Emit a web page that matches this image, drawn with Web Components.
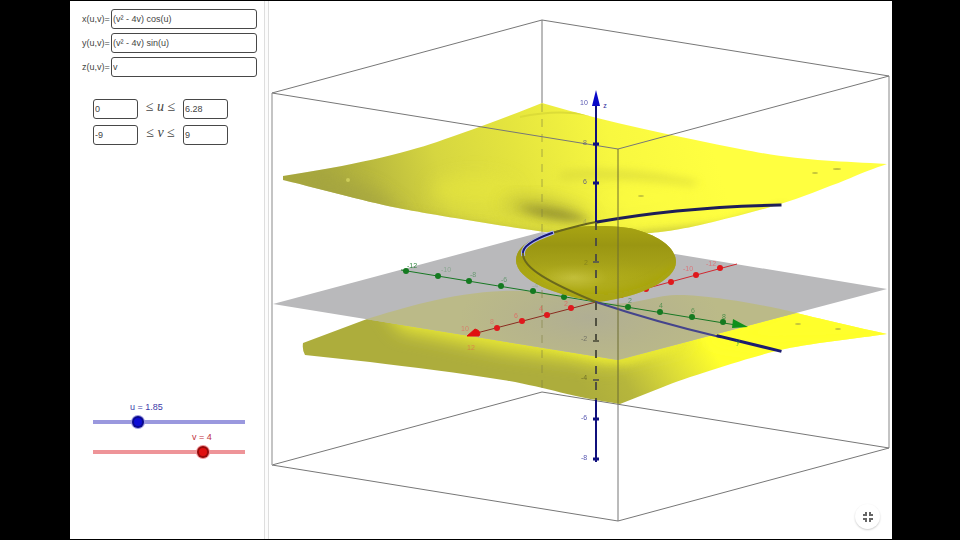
<!DOCTYPE html>
<html lang="en">
<head>
<meta charset="utf-8">
<title>Parametric surface</title>
<style>
html,body{margin:0;background:#000}
body{font-family:"Liberation Sans",Arial,sans-serif;font-size:9px;color:#444}
</style>
</head>
<body>
<surface-app>
  <control-panel slot="controls">
    <formula-field slot="formula" label="x(u,v)=" value="(v² - 4v) cos(u)"></formula-field>
    <formula-field slot="formula" label="y(u,v)=" value="(v² - 4v) sin(u)"></formula-field>
    <formula-field slot="formula" label="z(u,v)=" value="v"></formula-field>
    <range-field slot="range" name="u" low="0" high="6.28"></range-field>
    <range-field slot="range" name="v" low="-9" high="9"></range-field>
    <param-slider slot="slider" name="u" min="0" max="6.28" value="1.85" style="--track:#9a98de;--thumb:#0c0cd6;--ink:#3a3aa8;--shift:38px"></param-slider>
    <param-slider slot="slider" name="v" min="-9" max="9" value="4" style="--track:#ee9498;--thumb:#e01010;--ink:#c03040;--shift:100px"></param-slider>
  </control-panel>
  <surface-view slot="view"></surface-view>
</surface-app>

<script>
class Base extends HTMLElement {
  mount(html) { this.attachShadow({ mode: "open" }).innerHTML = html; }
}

customElements.define("surface-app", class extends Base {
  connectedCallback() {
    this.mount(`<style>
      :host{display:grid;grid-template-columns:194px 5px minmax(0,1fr);height:100vh;box-sizing:border-box;padding:1px 68px 1px 70px;background:#000}
      .split{background:#fcfcfc;border:solid #dedede;border-width:0 1px;box-sizing:border-box}
    </style><slot name="controls"></slot><div class="split"></div><slot name="view"></slot>`);
  }
});

customElements.define("control-panel", class extends Base {
  connectedCallback() {
    this.mount(`<style>
      :host{display:flex;flex-direction:column;background:#fff;box-sizing:border-box;padding:8px 7px 80px 12px}
      .formulas{display:grid;gap:4px}
      .ranges{display:grid;gap:6px;margin:22px 0 0 11px}
      .sliders{display:grid;gap:2px;margin-top:auto}
    </style>
    <div class="formulas"><slot name="formula"></slot></div>
    <div class="ranges"><slot name="range"></slot></div>
    <div class="sliders"><slot name="slider"></slot></div>`);
  }
});

const fieldCss = `input{font:inherit;color:#444;box-sizing:border-box;height:20px;min-width:0;margin:0;padding:0 1px;border:1px solid #484848;border-radius:3px;background:#fff;outline:0}`;

customElements.define("formula-field", class extends Base {
  connectedCallback() {
    this.mount(`<style>${fieldCss}
      :host{display:flex;align-items:center}
      label{flex:0 0 29px;white-space:nowrap}
      input{flex:1}
    </style><label for="f">${this.getAttribute("label")}</label><input id="f" type="text" value="${this.getAttribute("value")}">`);
  }
});

customElements.define("range-field", class extends Base {
  connectedCallback() {
    const n = this.getAttribute("name");
    this.mount(`<style>${fieldCss}
      :host{display:grid;grid-template-columns:45px 45px 45px;align-items:center}
      span{font:14px/16px "Liberation Serif","Times New Roman",serif;text-align:center;white-space:nowrap;padding-bottom:4px}
    </style><input type="text" aria-label="${n} minimum" value="${this.getAttribute("low")}"><span>≤ <i>${n}</i> ≤</span><input type="text" aria-label="${n} maximum" value="${this.getAttribute("high")}">`);
  }
});

customElements.define("param-slider", class extends Base {
  connectedCallback() {
    const a = k => this.getAttribute(k);
    this.mount(`<style>
      :host{display:grid;gap:2px;padding-left:5px}
      label{color:var(--ink);line-height:12px;padding-left:calc(var(--shift) + 5px)}
      input{appearance:none;width:164px;height:14px;margin:0;background:none;outline:0}
      input::-webkit-slider-runnable-track{height:4px;background:linear-gradient(var(--track),var(--track)) center/calc(100% - 12px) 4px no-repeat}
      input::-webkit-slider-thumb{appearance:none;box-sizing:border-box;width:12px;height:12px;margin-top:-4px;border-radius:50%;background:var(--thumb);border:2px solid #0005;box-shadow:0 0 0 1px var(--track)}
    </style><label for="s">${a("name")} = ${a("value")}</label><input id="s" type="range" step="any" min="${a("min")}" max="${a("max")}" value="${a("value")}">`);
  }
});

const UPPER = "M283 176C350 166 405 153 437 142S515 114 542 103C610 123 680 137 740 149S835 161 887 164C860 173 845 181 830 186C790 203 750 213 713 222S660 232 640 234H560C520 229 435 215 403 209S325 190 283 180Z";
const LOWER = "M303 343L367 319C400 309 450 293 503 291S560 300 600 303S650 295 680 295S770 306 793 312S860 328 887 334C860 338 805 344 780 350S690 376 663 387L620 404C570 397 545 387 503 380S410 367 370 362L305 355Q302 350 303 343Z";
const PLANE = "M273 304L542 232L887 289L618 360Z";
const BOWL = "M516 260C516 247 534 235 560 230C580 225 615 225 634 229C660 236 676 248 676 262C676 280 640 297 598 302C558 296 516 281 516 260Z";

const dots = (pts, r, c) => pts.map(([x, y]) => `<circle cx="${x}" cy="${y}" r="${r}" fill="${c}"/>`).join("");
const texts = list => list.map(([x, y, t, c, o]) => `<text x="${x}" y="${y}" fill="${c}" opacity="${o}">${t}</text>`).join("");

customElements.define("surface-view", class extends Base {
  connectedCallback() {
    const N = "#2a2a9c", G = "#1c7a2c", R = "#f04850";
    this.mount(`<style>
      :host{display:block;position:relative;background:#fff;min-height:0}
      svg.scene{display:block;width:100%;height:100%}
      text{font:7px "Liberation Sans",Arial,sans-serif;text-anchor:middle}
      button{position:absolute;right:12px;bottom:10px;width:25px;height:25px;padding:0;border:0;border-radius:50%;background:#fff;box-shadow:0 1px 2px #0003;display:grid;place-items:center}
    </style>
    <svg class="scene" viewBox="269 1 623 538" role="img" aria-label="Surface with x, y and z axes">
      <defs>
        <linearGradient id="up" gradientUnits="userSpaceOnUse" x1="330" y1="205" x2="700" y2="100">
          <stop offset="0" stop-color="#a8a83e"/><stop offset=".12" stop-color="#b8b83e"/><stop offset=".3" stop-color="#d6d640"/><stop offset=".5" stop-color="#e4e43e"/><stop offset=".75" stop-color="#f8f840"/><stop offset="1" stop-color="#ffff40"/>
        </linearGradient>
        <linearGradient id="low" gradientUnits="userSpaceOnUse" x1="590" y1="400" x2="700" y2="330">
          <stop offset="0" stop-color="#adad3c"/><stop offset=".3" stop-color="#b6b63c"/><stop offset=".65" stop-color="#dcdc38"/><stop offset="1" stop-color="#ffff2c"/>
        </linearGradient>
        <radialGradient id="bowl" gradientUnits="userSpaceOnUse" cx="574" cy="277" r="76" gradientTransform="translate(0 166) scale(1 .4)">
          <stop offset="0" stop-color="#c4c03c"/><stop offset=".45" stop-color="#b0ac1c"/><stop offset="1" stop-color="#aaa614"/>
        </radialGradient>
        <linearGradient id="rim" x1="0" y1="0" x2="0" y2="1">
          <stop offset="0" stop-color="#a8a412"/><stop offset=".25" stop-color="#9a9612"/><stop offset=".5" stop-color="#a09c18" stop-opacity=".6"/><stop offset=".7" stop-color="#aaa618" stop-opacity="0"/>
        </linearGradient>
        <radialGradient id="tint" gradientUnits="userSpaceOnUse" cx="590" cy="318" r="130" gradientTransform="translate(0 190) scale(1 .4)">
          <stop offset="0" stop-color="#b0ae94"/><stop offset=".5" stop-color="#b6b48c"/><stop offset="1" stop-color="#bbba88"/>
        </radialGradient>
        <clipPath id="cu"><path d="${UPPER}"/></clipPath>
        <clipPath id="cl"><path d="${LOWER}"/></clipPath>
        <clipPath id="cp"><path d="${PLANE}"/></clipPath>
        <clipPath id="cb"><path d="${BOWL}"/></clipPath>
        <filter id="b4" x="-50%" y="-80%" width="200%" height="260%"><feGaussianBlur stdDeviation="4"/></filter>
        <filter id="b9" x="-50%" y="-80%" width="200%" height="260%"><feGaussianBlur stdDeviation="9"/></filter>
      </defs>

      <g fill="none" stroke="#777" stroke-width="1">
        <path d="M272 93L542 20L889 76M542 20V104M272 465L542 392L889 448"/>
        <path d="M889 76V448" stroke="#888"/>
        <path d="M272 93V465" stroke="#c4c4c4" stroke-width="2"/>
      </g>

      <path d="${LOWER}" fill="url(#low)"/>
      <g clip-path="url(#cl)">
        <path d="M380 300L400 330L500 350L610 364L690 345L660 300Z" fill="#eaea36" filter="url(#b9)"/>
        <path d="M480 325L600 356L625 360L680 342" fill="none" stroke="#f0f030" stroke-width="8" opacity=".7" filter="url(#b4)"/>
        <path d="M700 340L800 300L890 325V345L760 348Z" fill="#ffff2c" filter="url(#b9)"/>
      </g>
      <path d="${PLANE}" fill="#b9b9bb"/>
      <path d="${LOWER}" fill="url(#tint)" clip-path="url(#cp)"/>

      <path d="${UPPER}" fill="url(#up)"/>
      <g clip-path="url(#cu)">
        <path d="M283 184L330 174L375 190L410 216L340 212Z" fill="#a4a440" opacity=".8" filter="url(#b9)"/>
        <ellipse cx="475" cy="190" rx="44" ry="15" fill="#e8e83e" opacity=".6" filter="url(#b9)"/>
        <path d="M560 172Q620 164 700 182L690 186Q620 176 560 180Z" fill="#d8d83a" opacity=".7" filter="url(#b4)"/>
        <ellipse cx="645" cy="198" rx="50" ry="8" fill="#ffff40" opacity=".6" filter="url(#b9)"/>
        <path d="M500 203Q550 194 594 219Q545 224 500 203Z" fill="#9c9c36" opacity=".75" filter="url(#b9)"/>
        <path d="M518 207Q556 206 594 221Q550 222 518 207Z" fill="#8c8a2e" opacity=".85" filter="url(#b4)"/>
        <path d="M400 214Q500 234 600 240L720 228L785 210" fill="none" stroke="#b4b43a" stroke-width="8" opacity=".8" filter="url(#b4)"/>
        <path d="M520 117Q555 109 592 115" fill="none" stroke="#dcdc38" stroke-width="2"/>
      </g>
      <g fill="#c4c43c"><ellipse cx="641" cy="196" rx="3" ry="1"/><ellipse cx="815" cy="173" rx="3" ry="1"/><ellipse cx="837" cy="169" rx="4" ry="1"/><ellipse cx="838" cy="329" rx="3" ry="1"/><ellipse cx="798" cy="324" rx="3" ry="1"/></g>
      <circle cx="348" cy="180" r="2" fill="#cccc58"/>

      <g stroke="#8a2c20" stroke-width="1" fill="none"><path d="M596 302L469 335"/><path d="M596 302L737 264" stroke="#d02830"/></g>
      <path d="M401 270L596 302L742 326" stroke="#187824" stroke-width="1" fill="none"/>
      ${dots([[406,271],[438,276],[469,281],[501,286],[533,291],[564,297],[628,307],[660,312],[692,317],[723,322]], 3, "#147a20")}
      ${dots([[720,268],[696,275],[671,282],[646,289],[621,295],[571,308],[547,315],[522,321],[497,328]], 3, "#e0181c")}
      <path d="M733 319L748 327L732 328Z" fill="#10901c"/>
      <path d="M467 336L475 329Q482 331 479 336Z" fill="#e01010" stroke="#e01010"/>

      <path d="${BOWL}" fill="url(#bowl)"/><path d="${BOWL}" fill="url(#rim)"/>
      <path d="M516 262Q540 300 598 298T676 268" fill="none" stroke="#a8a40c" stroke-width="8" clip-path="url(#cb)" filter="url(#b4)"/>

      <g fill="none" stroke-linecap="square">
        <path d="M596 222Q580 225 552 233" stroke="#68661c" stroke-width="2"/>
        <path d="M552 233C532 240 522 247 523 254" stroke="#b0b8f0" stroke-width="4"/>
        <path d="M552 233C532 240 522 247 523 254" stroke="#181878" stroke-width="2"/>
        <path d="M523 254C523 268 550 283 596 302" stroke="#6a681c" stroke-width="2"/>
        <path d="M596 302C650 320 690 330 720 337" stroke="#44448c" stroke-width="2"/>
        <path d="M718 336L780 351" stroke="#1c1c70" stroke-width="3"/>
        <path d="M597 222Q680 207 780 205" stroke="#1e1e58" stroke-width="3"/>
      </g>

      <g fill="none" stroke="#777" stroke-width="1">
        <path d="M542 104V232M542 290V392" stroke="#808040" stroke-dasharray="8 7" opacity=".6"/>
        <path d="M272 93L618 149L889 76M272 465L618 521L889 448"/>
        <path d="M618 149V404" stroke="#6c6c30"/><path d="M618 404V521"/>
      </g>

      <path d="M596 222V400" stroke="#505040" stroke-width="2" stroke-dasharray="8 8" fill="none"/>
      <path d="M596 104V222M596 400V462" stroke="#10107c" stroke-width="2"/>
      <path d="M596 90L600 106H592Z" fill="#0808c8"/>
      <path d="M593 144H599M593 183H599M593 419H599M593 459H599" stroke="#101080" stroke-width="3"/>
      <path d="M593 262H599M593 341H599M593 380H599" stroke="#606048" stroke-width="2"/>
      ${texts([[584,105,"10",N,.8],[605,108,"z",N,1],[585,145,"8",N,.6],[585,184,"6",N,.7],[585,224,"4",N,.2],[586,265,"2","#555520",.4],[584,341,"-2","#555",.7],[584,380,"-4","#555520",.7],[584,420,"-6",N,.8],[584,460,"-8",N,.8],
        [412,268,"-12",G,.9],[446,272,"-10",G,.3],[473,277,"-8",G,.5],[504,282,"-6",G,.5],[535,288,"-4",G,.2],[630,303,"2",G,.6],[661,308,"4",G,.6],[693,313,"6",G,.6],[724,319,"8",G,.7],[738,344,"y","#30a040",.7],
        [711,266,"-12",R,.6],[688,271,"-10",R,.6],[566,306,"2",R,.6],[541,311,"4",R,.6],[516,318,"6",R,.6],[492,324,"8",R,.5],[465,331,"10",R,.5],[471,350,"12",R,.5]])}
    </svg>
    <button type="button" aria-label="Exit full screen"><svg width="12" height="12" viewBox="0 0 12 12" fill="none" stroke="#666" stroke-width="2"><path d="M1 4H4V1M8 1V4H11M11 8H8V11M4 11V8H1"/></svg></button>`);
  }
});
</script>
</body>
</html>
